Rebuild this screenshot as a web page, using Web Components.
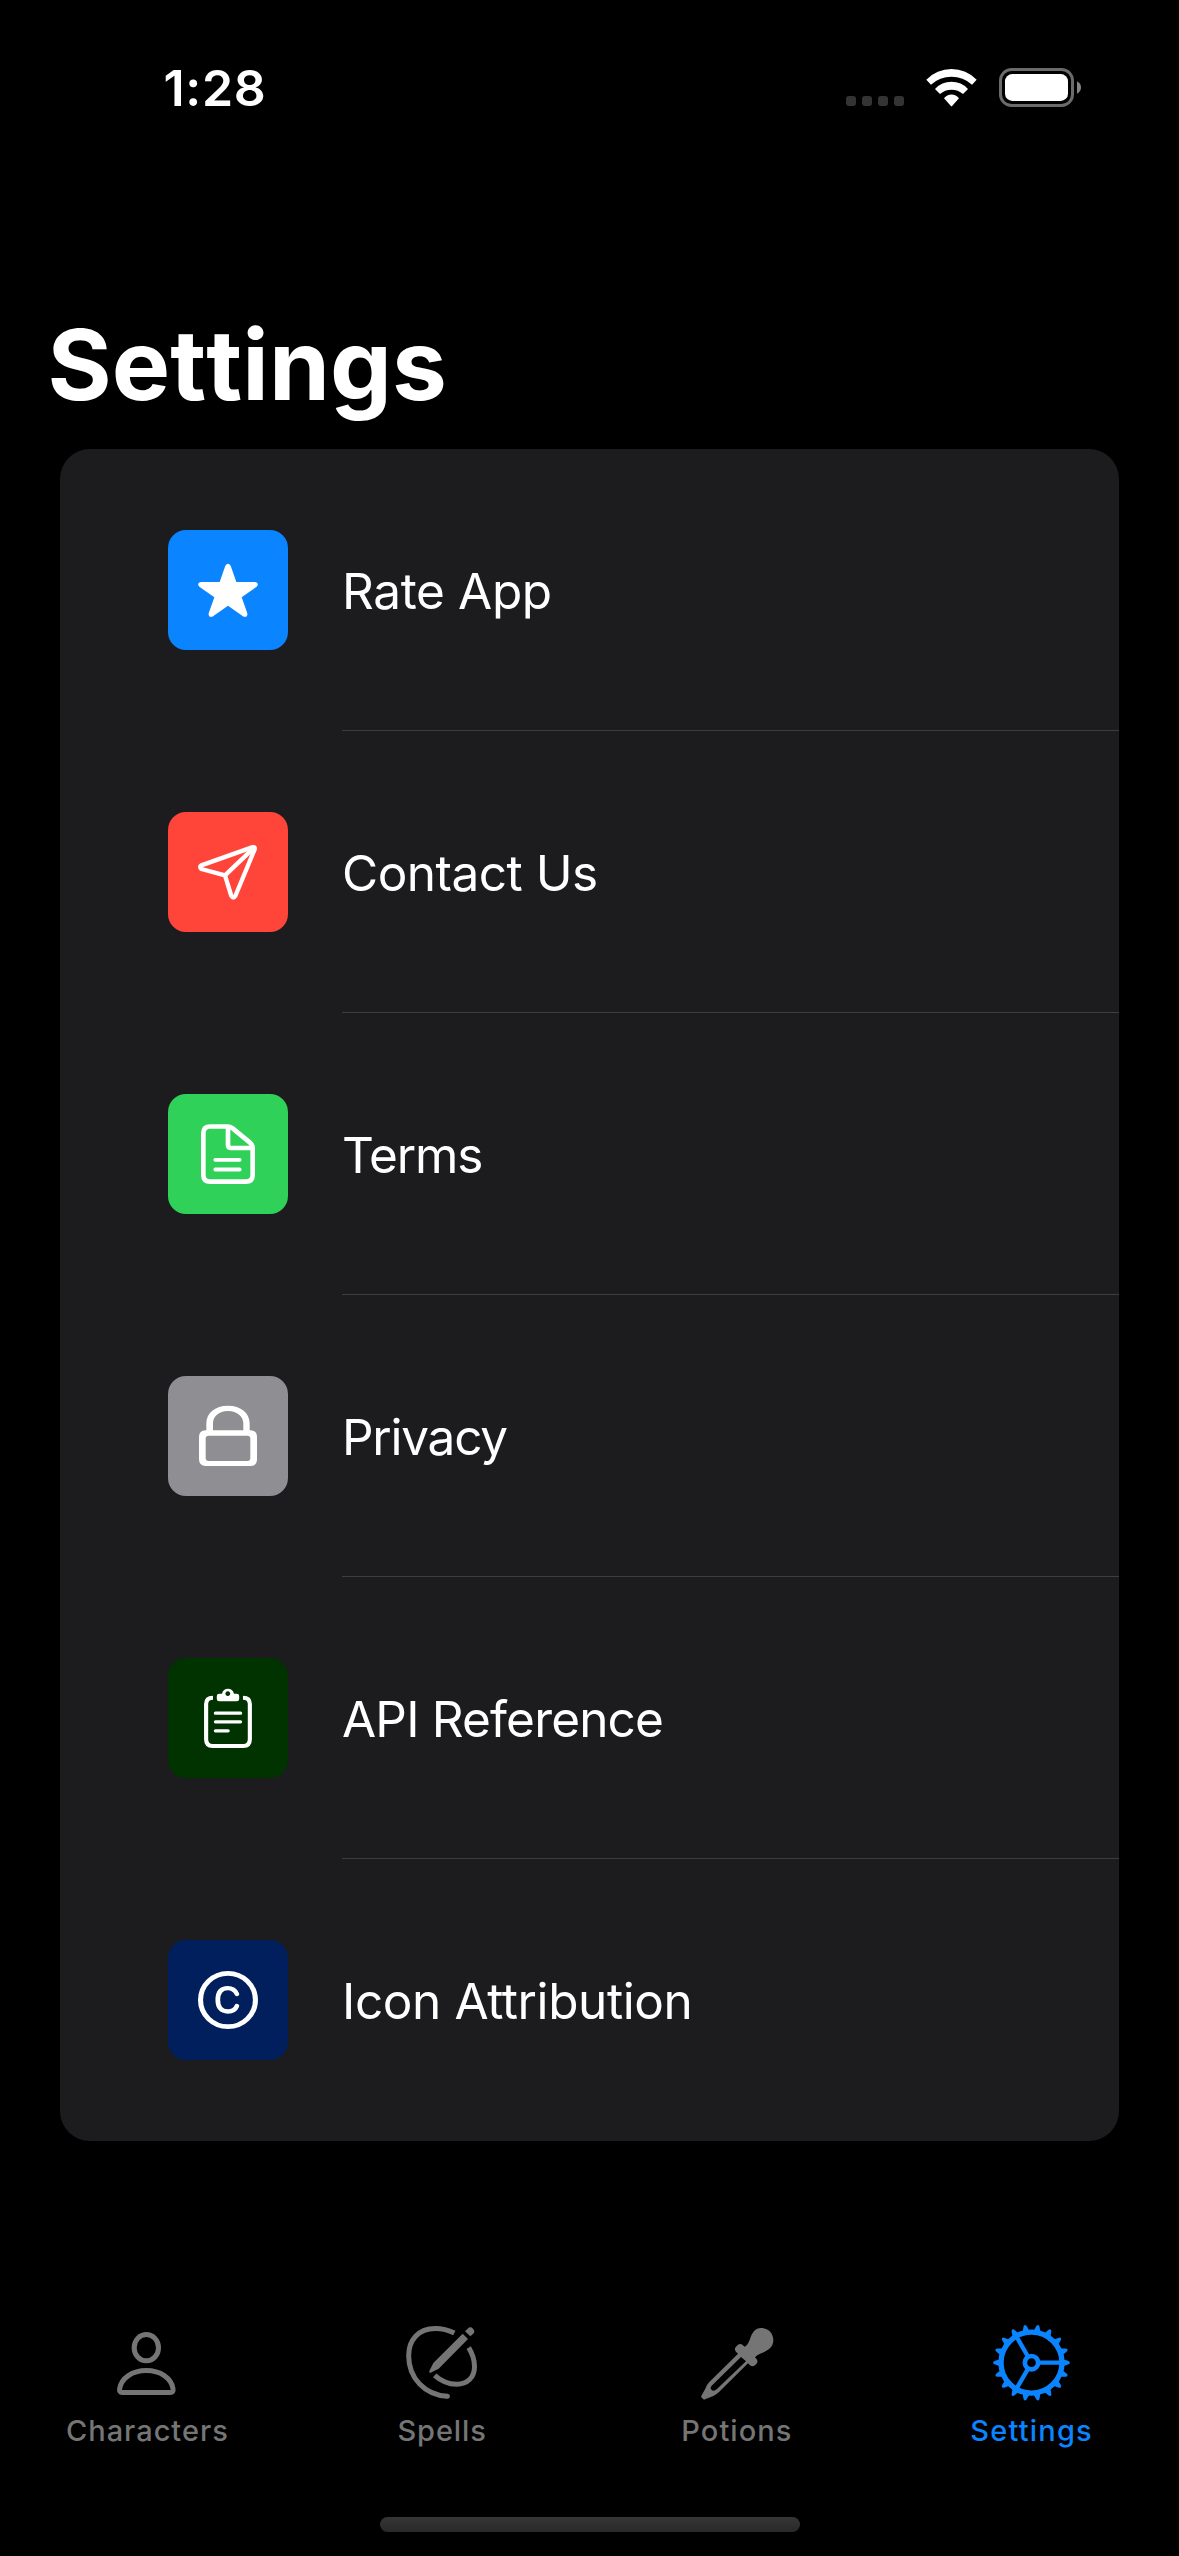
<!DOCTYPE html>
<html lang="en">
<head>
<meta charset="utf-8">
<title>Settings</title>
<style>
html, body { margin: 0; background: #000; }
body { width: 1179px; height: 2556px; overflow: hidden; font-family: Inter, "Liberation Sans", sans-serif; color: #fff; }
</style>
</head>
<body>
<settings-app></settings-app>

<script>
const define = (name, html, setup) => {
  const template = document.createElement('template');
  template.innerHTML = html;
  customElements.define(name, class extends HTMLElement {
    connectedCallback() {
      if (this.shadowRoot) return;
      this.attachShadow({ mode: 'open' }).append(template.content.cloneNode(true));
      if (setup) setup(this, this.shadowRoot);
    }
  });
};

const teeth = Array.from({ length: 18 }, (_, i) =>
  `<path transform="rotate(${i * 20} 1115 188)" d="M1208 176 L1214 179 L1224 182.500 Q1230 184 1230 188 Q1230 192 1224 193.500 L1214 197 L1208 200Z"/>`).join('');

// Each icon: [viewBox, markup]. Shapes inherit currentColor.
const icons = {
  star: ['54 60 360 360', '<path d="M226 167 Q234 156 242 167 L259 216 L315 216 Q329 219 320 230 L275 262 L292 310 Q293 323 281 320 L234 287 L187 320 Q175 323 176 310 L193 262 L148 230 Q139 219 153 216 L209 216Z"/>'],
  plane: ['54 66 360 360', '<g fill="none" stroke="currentColor" stroke-width="13" stroke-linejoin="round" stroke-linecap="round"><path d="M154 226 L308 171.500 Q316 170 314 178 L256 318 Q250 328 244 318 L225 256 L154 237 Q147 231 154 226Z"/><path d="M225 256 L310 175"/></g>'],
  doc: ['54 42 360 360', '<g fill="none" stroke="currentColor" stroke-width="14" stroke-linejoin="round" stroke-linecap="round"><path d="M232 139.500 H180 Q160 139.500 160 160 V285 Q160 305 181 305 H287 Q308 305 308 285 V203 Q308 195 300 188 L248 145 Q241 139.500 232 139.500Z"/><path d="M234 141 V194 Q234 204 244 204 H306"/><path stroke-width="11.500" d="M196 239.500 H269 M196 268.500 H269"/></g>'],
  lock: ['54 48 360 360', '<path fill-rule="evenodd" d="M167 211 H301 Q321 211 321 231 V298 Q321 318 301 318 H167 Q147 318 147 298 V231 Q147 211 167 211Z M176 227 Q167 227 167 236 V294 Q167 303 176 303 H292 Q301 303 301 294 V236 Q301 227 292 227Z"/><path d="M169 215 V190 C169 160 195 137.500 234 137.500 C273 137.500 299 160 299 190 V215 H280 V190 C280 170 262 153 234 153 C206 153 189 170 189 190 V215Z"/>'],
  clipboard: ['52.3 54 348.5 360', '<path fill="none" stroke="currentColor" stroke-width="12" d="M183 173 Q163 173 163 192 V298 Q163 318 182 318 H271 Q290 318 290 298 V192 Q290 173 270 173"/><path fill-rule="evenodd" d="M201 161 H209 C211 151 218 146 226 146 C235 146 242 151 244 161 H252 Q259 161 259 168 V177 Q259 184 252 184 H201 Q194 184 194 177 V168 Q194 161 201 161Z M226 154 A7 7 0 1 0 226.010 154Z"/><path fill="none" stroke="currentColor" stroke-width="9.500" stroke-linecap="round" d="M190 219.500 H263 M190 245.500 H263 M190 272.500 H227"/>'],
  copyright: ['49.5 60 330.1 360', '<g fill="none" stroke="currentColor" stroke-width="14"><ellipse cx="214.500" cy="240" rx="75.500" ry="80"/><path stroke-width="13" stroke-linecap="round" d="M239 222 C234 210 226 204.500 214 204.500 C196 204.500 186.500 217 186.500 240 C186.500 262 196 274.500 214 274.500 C226 274.500 235 269 239 258"/></g>'],
  person: ['202 66 240 240', '<g fill="none" stroke="currentColor" stroke-width="15"><ellipse cx="320" cy="143" rx="36.500" ry="39.500"/><path d="M248 277.500 H392 Q402 277.500 400 266 C395 234 362 211.500 320 211.500 C278 211.500 245 234 240 266 Q238 277.500 248 277.500Z"/></g>'],
  spell: ['1086 66 240 240', '<g fill="none" stroke="currentColor" stroke-width="15"><path d="M1243 99 C1225 90 1205 85.500 1186 85.500 C1135 85.500 1106 120 1106 167 C1106 235 1155 285 1222 289"/><path d="M1286 143 C1298 162 1303.500 180 1303.500 200 C1303.500 232 1282 252.500 1250 252.500 C1225 252.500 1203 243 1184 226"/></g><circle cx="1222" cy="289" r="7.500"/><path d="M1268 101 L1284 117 L1196 206 L1172 218 Q1166 220 1168 213 L1180 189Z M1275 94 L1283 86 Q1291 78 1299 86 Q1307 94 1299 102 L1291 109Z"/>'],
  dropper: ['111 66 240 240', '<path d="M303 84 C325 84 340 100 340 121 C340 141 325 151 308 158 C297 163 290 165 285 172 L289 176 Q296 183 289 192 L285 196 Q277 202 270 196 L264 190 L177 276 Q170 283 160 288 L137 297 L132 299.500 L123 291 L125 286 L136 266 Q140 254 148 246 L234 161 L228 155 Q221 148 228 140 L233 135 Q241 129 248 135 L254 140 C262 136 266 128 270 117 C276 98 286 84 303 84Z M243 171 L155 257 Q149 264 155 270 Q162 275 170 268 L258 184Z" fill-rule="evenodd"/>'],
  gear: ['996.5 66 240 240', `<g fill="none" stroke="currentColor"><circle cx="1115" cy="188" r="91.500" stroke-width="16"/><circle cx="1115" cy="188" r="20" stroke-width="14"/><path stroke-width="13" d="M1138 188 H1204 M1103.500 168 L1070 110 M1103.500 208 L1070 266"/></g>${teeth}`],
  cellular: ['78 81 174 120', '<g fill="#343434"><rect x="78" y="168" width="30" height="30" rx="9"/><rect x="126" y="168" width="30" height="30" rx="9"/><rect x="174" y="168" width="30" height="30" rx="9"/><rect x="222" y="168" width="30" height="30" rx="9"/></g>'],
  wifi: ['318 81 153 120', '<path d="M319 119 A105 105 0 0 1 470 119 L456 134 A91 91 0 0 0 333 134Z M345 147 A67 67 0 0 1 444 147 L429 162 A52 52 0 0 0 360 162Z M372 175 A28 28 0 0 1 417 175 L397 197 Q394.500 200 392 197Z"/>'],
  battery: ['537 81 249 120', '<rect x="541.500" y="88.500" width="216" height="108" rx="33" fill="none" stroke="#6b6b6b" stroke-width="9"/><rect x="555" y="102" width="189" height="81" rx="22"/><path fill="#858585" d="M771 124 Q783 130 783 142.500 Q783 155 771 161Z"/>']
};

define('ui-icon', `
<style>
:host { display: block; flex: none; width: 120px; height: 120px; }
svg { display: block; width: 100%; height: 100%; fill: currentColor; }
</style>
<svg preserveAspectRatio="none" aria-hidden="true"></svg>`, (el, root) => {
  const [box, markup] = icons[el.getAttribute('name')];
  const svg = root.querySelector('svg');
  svg.setAttribute('viewBox', box);
  svg.innerHTML = markup;
});

define('status-bar', `
<style>
:host { display: flex; justify-content: space-between; align-items: flex-start; box-sizing: border-box; height: 305px; padding: 58px 97px 0 163.5px; }
time { font-size: 50px; line-height: 60px; font-weight: 600; letter-spacing: .7px; }
.glyphs { display: flex; gap: 22px; padding-top: 9px; }
ui-icon { height: 40px; }
.cell { width: 58px; } .wifi { width: 51px; } .batt { width: 83px; }
</style>
<time><slot></slot></time>
<div class="glyphs"><ui-icon class="cell" name="cellular"></ui-icon><ui-icon class="wifi" name="wifi"></ui-icon><ui-icon class="batt" name="battery"></ui-icon></div>`);

define('large-title', `
<style>
:host { display: block; height: 144px; padding-left: 47.5px; }
h1 { margin: 0; font-size: 98px; line-height: 120px; font-weight: 700; letter-spacing: .1px; font-kerning: none; }
</style>
<h1><slot></slot></h1>`);

define('settings-row', `
<style>
:host { display: flex; height: 282px; box-sizing: border-box; padding-left: 108px; align-items: center; gap: 54px; color: #fff; }
.tile { flex: none; width: 120px; height: 120px; border-radius: 18px; background: var(--tint); }
.body { flex: 1; align-self: stretch; display: flex; align-items: center; box-sizing: border-box; border-bottom: 1px solid #3d3d40; padding-top: 3px; }
:host([last]) .body { border-color: transparent; }
span { font-size: 49.5px; line-height: 60px; letter-spacing: var(--track); white-space: nowrap; }
</style>
<div class="tile"></div>
<div class="body"><span><slot></slot></span></div>`, (el, root) => {
  const icon = document.createElement('ui-icon');
  icon.setAttribute('name', el.getAttribute('icon'));
  root.querySelector('.tile').append(icon);
  el.style.setProperty('--tint', el.getAttribute('tint'));
  el.style.setProperty('--track', el.getAttribute('track') + 'px');
});

define('settings-list', `
<style>
:host { display: flex; flex-direction: column; margin: 0 60px; background: #1c1c1e; border-radius: 30px; overflow: hidden; }
</style>
<slot></slot>`);

define('tab-item', `
<style>
:host { display: flex; flex: 1 1 0; flex-direction: column; align-items: center; gap: 11px; color: #757575; }
:host([active]) { color: #0a84ff; }
ui-icon { width: 80px; height: 80px; }
span { font-size: 29px; line-height: 36px; font-weight: 500; letter-spacing: var(--track); white-space: nowrap; }
</style>
<div class="icon"></div>
<span><slot></slot></span>`, (el, root) => {
  const icon = document.createElement('ui-icon');
  icon.setAttribute('name', el.getAttribute('icon'));
  root.querySelector('.icon').append(icon);
  el.style.setProperty('--track', el.getAttribute('track') + 'px');
});

define('tab-bar', `
<style>
:host { display: flex; box-sizing: border-box; height: 195px; }
</style>
<slot></slot>`);

define('home-indicator', `
<style>
:host { display: block; width: 420px; height: 15px; margin: 0 auto; border-radius: 8px; background: linear-gradient(#363636, #292929); }
</style>`);

define('settings-app', `
<style>
:host { display: flex; flex-direction: column; width: 1179px; height: 2556px; background: #000; }
tab-bar { margin-top: 181px; }
</style>
<status-bar>1:28</status-bar>
<large-title>Settings</large-title>
<settings-list>
  <settings-row icon="star" tint="#0a84ff" track="-.36">Rate App</settings-row>
  <settings-row icon="plane" tint="#ff453a" track="-.5">Contact Us</settings-row>
  <settings-row icon="doc" tint="#30d158" track="-1.1">Terms</settings-row>
  <settings-row icon="lock" tint="#8e8e93" track="-1.25">Privacy</settings-row>
  <settings-row icon="clipboard" tint="#003300" track="-.82">API Reference</settings-row>
  <settings-row icon="copyright" tint="#001f5c" track="-.4" last>Icon Attribution</settings-row>
</settings-list>
<tab-bar>
  <tab-item icon="person" track=".98">Characters</tab-item>
  <tab-item icon="spell" track=".9">Spells</tab-item>
  <tab-item icon="dropper" track="1.05">Potions</tab-item>
  <tab-item icon="gear" track="1.2" active>Settings</tab-item>
</tab-bar>
<home-indicator></home-indicator>`);
</script>
</body>
</html>
